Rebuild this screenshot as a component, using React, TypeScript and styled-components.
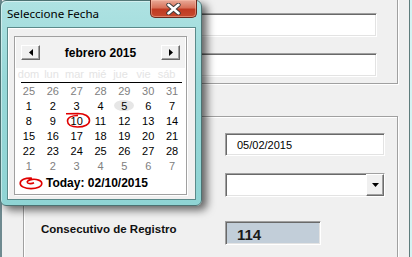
import React from "react";
import styled, { createGlobalStyle } from "styled-components";

const Global = createGlobalStyle`
  html, body { margin: 0; padding: 0; background: #f0f0f0; }
  #root { width: 412px; height: 257px; overflow: hidden; position: relative; }
  * { box-sizing: border-box; }
`;

const Screen = styled.div`
  position: relative;
  width: 412px;
  height: 257px;
  display: flex;
  overflow: hidden;
  background: #f0f0f0;
  font-family: "Liberation Sans", Arial, sans-serif;
`;

const LeftEdge = styled.div`
  width: 2px;
  background: #6e8a90;
`;

const RightEdge = styled.div`
  width: 3px;
  border-left: 1px solid #5e7c7c;
  background: #d6f3f3;
`;

const Content = styled.div`
  flex: 1;
  padding-left: 21px;
  display: flex;
  flex-direction: column;
`;

const GroupBox = styled.div<{ $top: number; $height: number }>`
  width: 375px;
  height: ${(p) => p.$height}px;
  margin-top: ${(p) => p.$top}px;
  border: 1px solid #a0a0a0;
  box-shadow: inset 1px 1px 0 #fff, 1px 1px 0 #fff;
  flex-shrink: 0;
`;

const Group1 = styled(GroupBox)`
  display: flex;
  flex-direction: column;
  align-items: flex-end;
  justify-content: flex-end;
  gap: 16px;
  padding: 0 20px 6px 0;
`;

const Group2 = styled(GroupBox)`
  display: flex;
  flex-direction: column;
  padding-top: 16px;
`;

const Sunken = styled.div<{ $w: number; $h: number; $bg?: string }>`
  width: ${(p) => p.$w}px;
  height: ${(p) => p.$h}px;
  background: ${(p) => p.$bg || "#fff"};
  border: 1px solid;
  border-color: #a0a0a0 #fff #fff #a0a0a0;
  box-shadow: inset 1px 1px 0 #696969, inset -1px -1px 0 #e3e3e3;
  display: flex;
  align-items: center;
  flex-shrink: 0;
`;

const FieldRow = styled.div<{ $mt: number }>`
  display: flex;
  align-items: center;
  margin-top: ${(p) => p.$mt}px;
`;

const FieldLabel = styled.div`
  width: 201px;
  padding-left: 17px;
  margin-bottom: 9px;
  font-weight: bold;
  font-size: 11.5px;
  color: #111;
`;

const DateText = styled.span`
  padding-left: 11px;
  font-size: 11px;
  color: #000;
`;

const BigValue = styled.span`
  padding-left: 11px;
  padding-top: 3px;
  font-size: 15px;
  font-weight: bold;
  color: #1a1a1a;
`;

const ComboBody = styled.div`
  flex: 1;
`;

const DropButton = styled.div`
  width: 18px;
  height: 22px;
  background: #f0f0f0;
  border: 1px solid;
  border-color: #fff #6d6d6d #6d6d6d #fff;
  box-shadow: inset -1px -1px 0 #a0a0a0;
  display: flex;
  align-items: center;
  justify-content: center;
`;

/* ---------- popup ---------- */

const Popup = styled.div`
  position: absolute;
  left: 0;
  top: 0;
  width: 202px;
  height: 206px;
  border: 1px solid #4c7272;
  border-radius: 6px;
  background: linear-gradient(180deg, #aee2e2 0%, #97d8d8 40%, #8fd4d4 100%);
  box-shadow: 5px 4px 9px rgba(0, 0, 0, 0.6), inset 1px 1px 0 rgba(255, 255, 255, 0.45);
  display: flex;
  flex-direction: column;
`;

const TitleBar = styled.div`
  height: 26px;
  display: flex;
  align-items: flex-start;
  justify-content: space-between;
  padding-left: 6px;
`;

const Title = styled.div`
  font-family: "Noto Sans", "Open Sans", sans-serif;
  font-size: 11.6px;
  color: #000;
  margin-top: 5px;
`;

const CloseButton = styled.div`
  width: 47px;
  height: 18px;
  margin-top: -1px;
  margin-right: 4px;
  border: 1px solid #6a2a1e;
  border-top: none;
  border-radius: 0 0 5px 5px;
  background: linear-gradient(180deg, #e9aa98 0%, #d8725a 45%, #c03a22 55%, #c64a2e 100%);
  box-shadow: inset 0 0 0 1px rgba(255, 200, 180, 0.45);
  display: flex;
  align-items: center;
  justify-content: center;
`;

const Client = styled.div`
  margin: 0 4px 0 6px;
  width: 189px;
  height: 173px;
  border: 1px solid #5b8a8a;
  background: #f0f0f0;
  box-shadow: inset 1px 1px 0 #fff;
  padding: 8px 0 0 6px;
`;

const Calendar = styled.div`
  width: 173px;
  height: 159px;
  background: #fff;
  border: 1px solid #a0a0a0;
  box-shadow: 1px 1px 0 #fff;
  display: flex;
  flex-direction: column;
  font-size: 11px;
`;

const CalHeader = styled.div`
  height: 31px;
  background: #f2f2f2;
  margin: 0 1px;
  display: flex;
  align-items: center;
  justify-content: space-between;
  padding: 0 5px 0 5px;
`;

const NavButton = styled.div`
  width: 19px;
  height: 15px;
  background: #f0f0f0;
  border: 1px solid;
  border-color: #fff #696969 #696969 #fff;
  box-shadow: inset -1px -1px 0 #a0a0a0;
  display: flex;
  align-items: center;
  justify-content: center;
`;

const MonthTitle = styled.div`
  font-weight: bold;
  font-size: 12px;
  color: #000;
`;

const DayNames = styled.div`
  height: 15px;
  margin: 0 4px 0 6px;
  border-bottom: 1px solid #000;
  display: grid;
  grid-template-columns: repeat(7, 1fr);
  color: #e4e4e4;
`;

const DayName = styled.div`
  text-align: center;
  line-height: 13px;
  transform: translateX(-4px);
`;

const DayGrid = styled.div`
  display: grid;
  grid-template-columns: repeat(7, 23.86px);
  grid-auto-rows: 15px;
  margin-left: 2px;
`;

const DayCell = styled.div<{ $muted?: boolean }>`
  position: relative;
  display: flex;
  align-items: center;
  justify-content: center;
  color: ${(p) => (p.$muted ? "#808080" : "#000")};
`;

const SelectedBg = styled.span`
  width: 20px;
  height: 11px;
  border-radius: 50%;
  background: #e6e6e6;
  display: flex;
  align-items: center;
  justify-content: center;
`;

const RedMark = styled.svg`
  position: absolute;
  overflow: visible;
  pointer-events: none;
`;

const TodayRow = styled.div`
  height: 15px;
  margin-top: 2px;
  display: flex;
  align-items: center;
  padding-left: 4px;
  gap: 3px;
`;

const TodayText = styled.span`
  font-weight: bold;
  font-size: 12px;
  color: #000;
`;

type Day = { n: number; muted?: boolean };

const rows: Day[][] = [
  [25, 26, 27, 28, 29, 30, 31].map((n) => ({ n, muted: true })),
  [1, 2, 3, 4, 5, 6, 7].map((n) => ({ n })),
  [8, 9, 10, 11, 12, 13, 14].map((n) => ({ n })),
  [15, 16, 17, 18, 19, 20, 21].map((n) => ({ n })),
  [22, 23, 24, 25, 26, 27, 28].map((n) => ({ n })),
  [1, 2, 3, 4, 5, 6, 7].map((n) => ({ n, muted: true })),
];

const names = ["dom", "lun", "mar", "mié", "jue", "vie", "sáb"];

function Tri({ dir }: { dir: "left" | "right" | "down" }) {
  if (dir === "down")
    return (
      <svg width="7" height="4" viewBox="0 0 7 4">
        <path d="M0 0H7L3.5 4Z" fill="#000" />
      </svg>
    );
  return (
    <svg width="4" height="7" viewBox="0 0 4 7">
      <path d={dir === "left" ? "M4 0V7L0 3.5Z" : "M0 0V7L4 3.5Z"} fill="#000" />
    </svg>
  );
}

export default function App() {
  return (
    <>
      <Global />
      <Screen>
        <LeftEdge />
        <Content>
          <Group1 $top={-31} $height={115}>
            <Sunken $w={227} $h={24} />
            <Sunken $w={227} $h={24} />
          </Group1>
          <Group2 $top={32} $height={170}>
            <FieldRow $mt={0}>
              <FieldLabel />
              <Sunken $w={160} $h={23}>
                <DateText>05/02/2015</DateText>
              </Sunken>
            </FieldRow>
            <FieldRow $mt={17}>
              <FieldLabel />
              <Sunken $w={160} $h={24}>
                <ComboBody />
                <DropButton>
                  <Tri dir="down" />
                </DropButton>
              </Sunken>
            </FieldRow>
            <FieldRow $mt={24}>
              <FieldLabel>Consecutivo de Registro</FieldLabel>
              <Sunken $w={96} $h={24} $bg="#c2ced9">
                <BigValue>114</BigValue>
              </Sunken>
            </FieldRow>
          </Group2>
        </Content>
        <RightEdge />

        <Popup>
          <TitleBar>
            <Title>Seleccione Fecha</Title>
            <CloseButton>
              <svg width="15" height="12" viewBox="0 0 15 12">
                <path d="M2.5 1.8L12.5 10.2M12.5 1.8L2.5 10.2" stroke="#3a3a3a" strokeWidth="4.4" strokeLinecap="round" />
                <path d="M2.5 1.8L12.5 10.2M12.5 1.8L2.5 10.2" stroke="#fff" strokeWidth="2.6" strokeLinecap="round" />
              </svg>
            </CloseButton>
          </TitleBar>
          <Client>
            <Calendar>
              <CalHeader>
                <NavButton>
                  <Tri dir="left" />
                </NavButton>
                <MonthTitle>febrero 2015</MonthTitle>
                <NavButton>
                  <Tri dir="right" />
                </NavButton>
              </CalHeader>
              <DayNames>
                {names.map((d) => (
                  <DayName key={d}>{d}</DayName>
                ))}
              </DayNames>
              <DayGrid>
                {rows.map((r, ri) =>
                  r.map((d, ci) => {
                    const key = `${ri}-${ci}`;
                    if (ri === 1 && d.n === 5)
                      return (
                        <DayCell key={key}>
                          <SelectedBg>{d.n}</SelectedBg>
                        </DayCell>
                      );
                    if (ri === 2 && d.n === 10)
                      return (
                        <DayCell key={key}>
                          {d.n}
                          <RedMark width="26" height="17" viewBox="0 0 26 17" style={{ left: 0, top: -1 }}>
                            <path
                              d="M1 1.8 L13 1.5 C20 1.6 24.5 4.5 24.5 8.5 C24.5 12.5 19.5 15 12.5 15 C6 15 2.5 12.5 2.5 9 C2.5 5.5 7 3.5 13 3.5"
                              fill="none"
                              stroke="#e00000"
                              strokeWidth="1.6"
                            />
                          </RedMark>
                        </DayCell>
                      );
                    return (
                      <DayCell key={key} $muted={d.muted}>
                        {d.n}
                      </DayCell>
                    );
                  })
                )}
              </DayGrid>
              <TodayRow>
                <svg width="24" height="14" viewBox="0 0 24 14">
                  <path
                    d="M13 2.2 C6 1.8 1.2 4 1.2 7.2 C1.2 10.5 6 12.6 12 12.6 C18 12.6 22.8 10.6 22.8 7.4 C22.8 4.4 17.5 3 13.5 3.4 C9.5 3.8 7.5 5.4 8.5 6.8 C9.5 8 13 7.8 15 6.8"
                    fill="none"
                    stroke="#e00000"
                    strokeWidth="1.6"
                  />
                </svg>
                <TodayText>Today: 02/10/2015</TodayText>
              </TodayRow>
            </Calendar>
          </Client>
        </Popup>
      </Screen>
    </>
  );
}
